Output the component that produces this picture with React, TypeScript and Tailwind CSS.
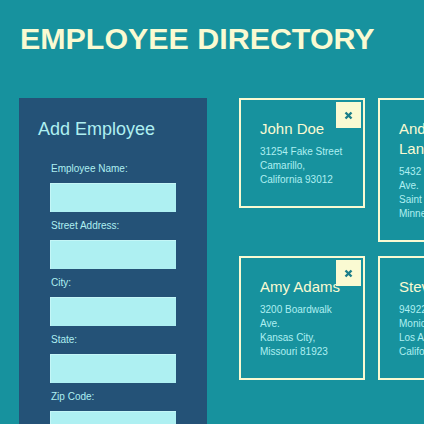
const employees = [
  { name: 'John Doe', street: '31254 Fake Street', city: 'Camarillo,', region: 'California 93012' },
  { name: 'Andrew Langley', street: '5432 Lakeshore Ave.', city: 'Saint Paul,', region: 'Minnesota 55101' },
  { name: 'Amy Adams', street: '3200 Boardwalk Ave.', city: 'Kansas City,', region: 'Missouri 81923' },
  { name: 'Steve Smith', street: '94922 Santa Monica Blvd.', city: 'Los Angeles,', region: 'California 90210' },
];

const fields = ['Employee Name:', 'Street Address:', 'City:', 'State:', 'Zip Code:', 'Phone:'];

function CloseIcon() {
  return (
    <svg width="9" height="9" viewBox="0 0 9 9">
      <path d="M1.5 1.5 L7.5 7.5 M7.5 1.5 L1.5 7.5" stroke="#1b7d89" strokeWidth="2.4" strokeLinecap="butt" />
    </svg>
  );
}

export default function App() {
  return (
    <div
      className="w-[424px] h-[424px] overflow-hidden bg-[#17929e]"
      style={{ fontFamily: '"Liberation Sans", Arial, sans-serif' }}
    >
      {/* Header */}
      <h1 className="pt-[23px] pl-[20px] text-[30.4px] leading-[30px] font-bold text-[#fafad2] whitespace-nowrap">
        EMPLOYEE DIRECTORY
      </h1>

      <div className="flex items-start mt-[45px] pl-[19px]">
        {/* Add Employee form */}
        <div className="w-[188px] shrink-0 bg-[#245277] pt-[20px] pb-[40px] h-[400px]">
          <h2 className="pl-[19px] text-[18px] leading-[22px] text-[#aeeff1] mb-[23px]">Add Employee</h2>
          <div className="px-[31px]">
            {fields.map((f) => (
              <div key={f}>
                <div className="pl-px text-[10px] leading-[12px] text-[#aeeff1] mb-[8px]">{f}</div>
                <div className="h-[29px] bg-[#aef0f2] border-t border-l border-[#c4f6f7] mb-[8px]" />
              </div>
            ))}
          </div>
        </div>

        {/* Cards */}
        <div className="grid grid-cols-[126px_126px] gap-x-[13px] gap-y-[14px] ml-[32px] items-start shrink-0">
          {employees.map((e) => (
            <div key={e.name} className="relative border-2 border-[#fafad2] p-[19px]">
              <div className="absolute top-[2px] right-[2px] w-[25px] h-[26px] bg-[#fafad2] flex items-center justify-center">
                <CloseIcon />
              </div>
              <div className="text-[15px] leading-[20px] text-[#fafad2] mb-[6px]">{e.name}</div>
              <div className="text-[10px] leading-[14px] text-[#aeeff1]">
                <div>{e.street}</div>
                <div>
                  {e.city} {e.region}
                </div>
              </div>
            </div>
          ))}
        </div>
      </div>
    </div>
  );
}
